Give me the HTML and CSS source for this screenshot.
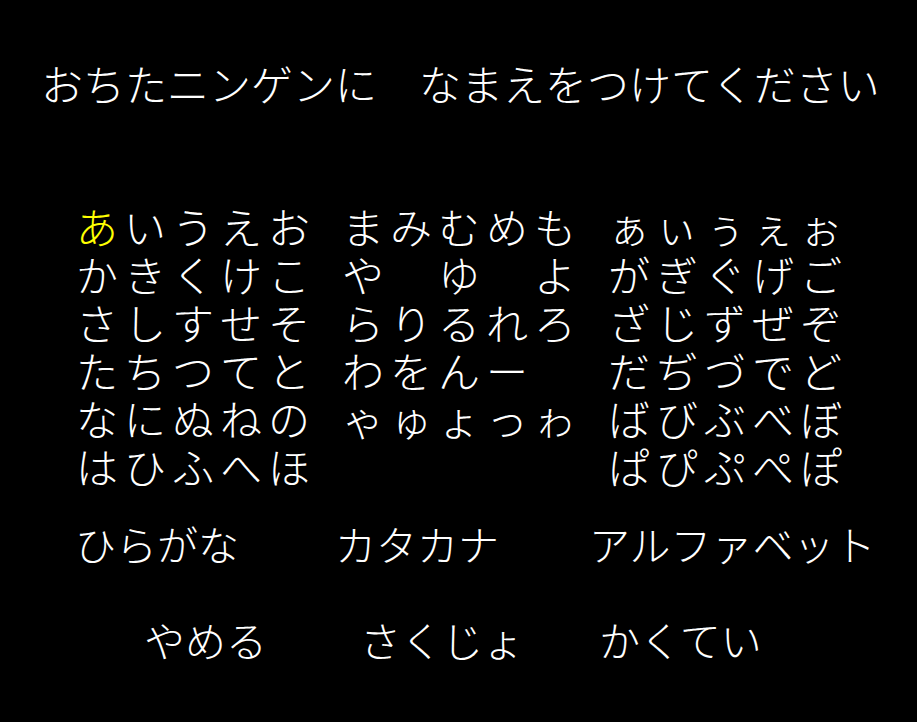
FILE: index.html
```html
<!DOCTYPE html>
<html lang="ja">
<head>
<meta charset="utf-8">
<title>なまえをつけてください</title>
<link rel="stylesheet" href="styles.css">
</head>
<body>
<div class="screen">
  <div class="title">おちたニンゲンに　なまえをつけてください</div>
  <div class="board">
    <div class="group">
      <span class="sel">あ</span><span>い</span><span>う</span><span>え</span><span>お</span>
      <span>か</span><span>き</span><span>く</span><span>け</span><span>こ</span>
      <span>さ</span><span>し</span><span>す</span><span>せ</span><span>そ</span>
      <span>た</span><span>ち</span><span>つ</span><span>て</span><span>と</span>
      <span>な</span><span>に</span><span>ぬ</span><span>ね</span><span>の</span>
      <span>は</span><span>ひ</span><span>ふ</span><span>へ</span><span>ほ</span>
    </div>
    <div class="group">
      <span>ま</span><span>み</span><span>む</span><span>め</span><span>も</span>
      <span>や</span><span></span><span>ゆ</span><span></span><span>よ</span>
      <span>ら</span><span>り</span><span>る</span><span>れ</span><span>ろ</span>
      <span>わ</span><span>を</span><span>ん</span><span>ー</span><span></span>
      <span>ゃ</span><span>ゅ</span><span>ょ</span><span>っ</span><span>ゎ</span>
      <span></span><span></span><span></span><span></span><span></span>
    </div>
    <div class="group">
      <span>ぁ</span><span>ぃ</span><span>ぅ</span><span>ぇ</span><span>ぉ</span>
      <span>が</span><span>ぎ</span><span>ぐ</span><span>げ</span><span>ご</span>
      <span>ざ</span><span>じ</span><span>ず</span><span>ぜ</span><span>ぞ</span>
      <span>だ</span><span>ぢ</span><span>づ</span><span>で</span><span>ど</span>
      <span>ば</span><span>び</span><span>ぶ</span><span>べ</span><span>ぼ</span>
      <span>ぱ</span><span>ぴ</span><span>ぷ</span><span>ぺ</span><span>ぽ</span>
    </div>
  </div>
  <div class="modes">
    <span>ひらがな</span>
    <span>カタカナ</span>
    <span>アルファベット</span>
  </div>
  <div class="actions">
    <span>やめる</span>
    <span>さくじょ</span>
    <span>かくてい</span>
  </div>
</div>
</body>
</html>
```

FILE: styles.css
```css
html, body {
  margin: 0;
  padding: 0;
  background: #000;
}

body {
  width: 917px;
  height: 722px;
  overflow: hidden;
  color: #fff;
  font-family: "Noto Sans CJK JP", "Noto Sans", sans-serif;
  font-weight: 300;
  font-size: 42px;
  line-height: 48px;
}

.screen {
  padding-top: 59px;
}

.title {
  padding-left: 41px;
  white-space: nowrap;
}

.board {
  display: flex;
  gap: 26px;
  margin-top: 95px;
  padding-left: 73px;
}

.group {
  display: grid;
  grid-template-columns: repeat(5, 48px);
  grid-auto-rows: 48px;
}

.group span {
  text-align: center;
}

.group .sel {
  color: #ffff00;
}

.modes {
  display: grid;
  grid-template-columns: 260px 254px auto;
  margin-top: 29px;
  padding-left: 75px;
  font-size: 41px;
  white-space: nowrap;
}

.actions {
  display: grid;
  grid-template-columns: 216px 239px auto;
  margin-top: 48px;
  padding-left: 144px;
  font-size: 41px;
  white-space: nowrap;
}
```
